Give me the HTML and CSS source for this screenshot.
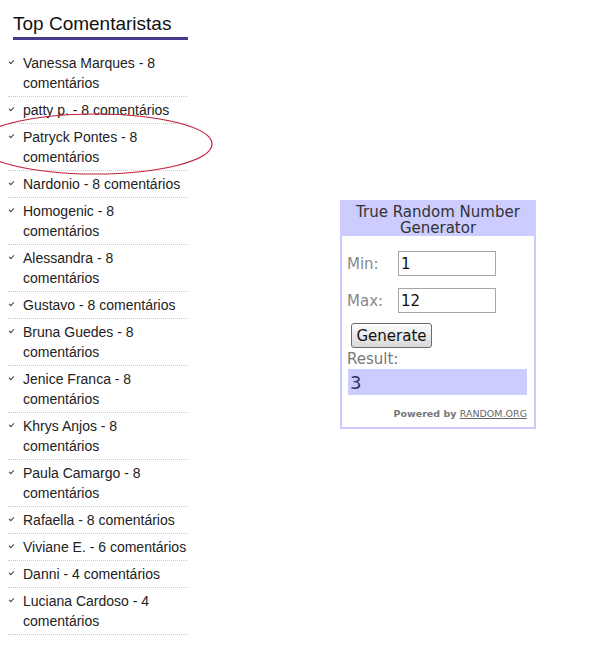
FILE: index.html
```html
<!DOCTYPE html>
<html lang="pt">
<head>
    <meta charset="UTF-8">
    <title>Top Comentaristas</title>
    <link rel="stylesheet" href="styles.css">
</head>
<body>
    <div class="page">
        <div class="sidebar">
            <h2 class="widget-title">Top Comentaristas</h2>
            <ul class="commenters">
                <li>Vanessa Marques - 8 comentários</li>
                <li>patty p. - 8 comentários</li>
                <li>Patryck Pontes - 8 comentários</li>
                <li>Nardonio - 8 comentários</li>
                <li>Homogenic - 8 comentários</li>
                <li>Alessandra - 8 comentários</li>
                <li>Gustavo - 8 comentários</li>
                <li>Bruna Guedes - 8 comentários</li>
                <li>Jenice Franca - 8 comentários</li>
                <li>Khrys Anjos - 8 comentários</li>
                <li>Paula Camargo - 8 comentários</li>
                <li>Rafaella - 8 comentários</li>
                <li>Viviane E. - 6 comentários</li>
                <li>Danni - 4 comentários</li>
                <li>Luciana Cardoso - 4 comentários</li>
            </ul>
        </div>

        <div class="rng">
            <div class="rng-head">True Random Number Generator</div>
            <div class="rng-body">
                <div class="rng-row">
                    <label for="min">Min:</label>
                    <input type="text" id="min" value="1">
                </div>
                <div class="rng-row">
                    <label for="max">Max:</label>
                    <input type="text" id="max" value="12">
                </div>
                <button class="rng-btn" type="button">Generate</button>
                <div class="rng-label">Result:</div>
                <div class="rng-result">3</div>
                <div class="rng-powered">Powered by <span class="rng-link">RANDOM.ORG</span></div>
            </div>
        </div>
    </div>

    <!-- circulo vermelho marcando o ganhador -->
    <svg class="mark" width="260" height="200" viewBox="0 0 260 200">
        <ellipse cx="95" cy="144" rx="117" ry="30" fill="none" stroke="#c3203c" stroke-width="1.2"/>
    </svg>
</body>
</html>
```

FILE: styles.css
```css
body {
    margin: 0;
    background: #fff;
    font-family: "Liberation Sans", Arial, sans-serif;
    color: #1a1a1a;
}
.page {
    display: flex;
    align-items: flex-start;
    padding-left: 8px;
}
.sidebar {
    width: 180px;
}
.widget-title {
    margin: 13px 0 0 5px;
    padding-bottom: 2px;
    font-size: 19px;
    font-weight: normal;
    line-height: 22px;
    color: #111;
    border-bottom: 3px solid #473c8a;
}
.commenters {
    list-style: none;
    margin: 10px 0 0;
    padding: 0;
}
.commenters li {
    display: flex;
    align-items: flex-start;
    padding: 3px 0;
    font-size: 14px;
    line-height: 20px;
    color: #222;
    border-bottom: 1px dotted #c8c8c8;
}
.commenters li::before {
    content: "";
    flex: none;
    width: 4px;
    height: 2px;
    margin: 7px 9px 0 1px;
    border-left: 1.5px solid #2f4a3c;
    border-bottom: 1.5px solid #2f4a3c;
    transform: rotate(-45deg);
}
.rng {
    width: 192px;
    margin: 200px 0 0 152px;
    border: 2px solid #ccccff;
    border-top: 0;
    font-family: "DejaVu Sans", Verdana, sans-serif;
}
.rng-head {
    background: #ccccff;
    padding: 4px 0 0;
    height: 32px;
    font-size: 15px;
    line-height: 16px;
    text-align: center;
    color: #333;
}
.rng-body {
    padding: 15px 7px 8px 5px;
}
.rng-row {
    display: flex;
    align-items: center;
    margin-bottom: 12px;
}
.rng-row label {
    width: 51px;
    font-size: 15px;
    color: #888;
}
.rng-row input {
    box-sizing: border-box;
    width: 98px;
    height: 25px;
    padding: 0 2px;
    border: 1px solid #a6a6a6;
    font-family: "DejaVu Sans", Verdana, sans-serif;
    font-size: 15px;
    color: #111;
}
.rng-btn {
    display: block;
    margin: -2px 0 0 4px;
    width: 81px;
    height: 25px;
    padding: 0;
    border: 1px solid #6b6b6b;
    border-radius: 3px;
    background: linear-gradient(#fdfdfd, #d8d8d8);
    font-family: "DejaVu Sans", Verdana, sans-serif;
    font-size: 15px;
    color: #111;
}
.rng-label {
    margin-top: 2px;
    font-size: 15px;
    line-height: 19px;
    color: #777;
}
.rng-result {
    margin-left: 1px;
    height: 26px;
    padding-left: 2px;
    background: #ccccff;
    font-size: 18px;
    line-height: 28px;
    color: #333366;
}
.rng-powered {
    margin-top: 13px;
    text-align: right;
    font-size: 9.5px;
    font-weight: bold;
    color: #777;
}
.rng-link {
    font-weight: normal;
    text-decoration: underline;
    color: #666;
}
.mark {
    position: absolute;
    left: 0;
    top: 0;
    pointer-events: none;
}
```
